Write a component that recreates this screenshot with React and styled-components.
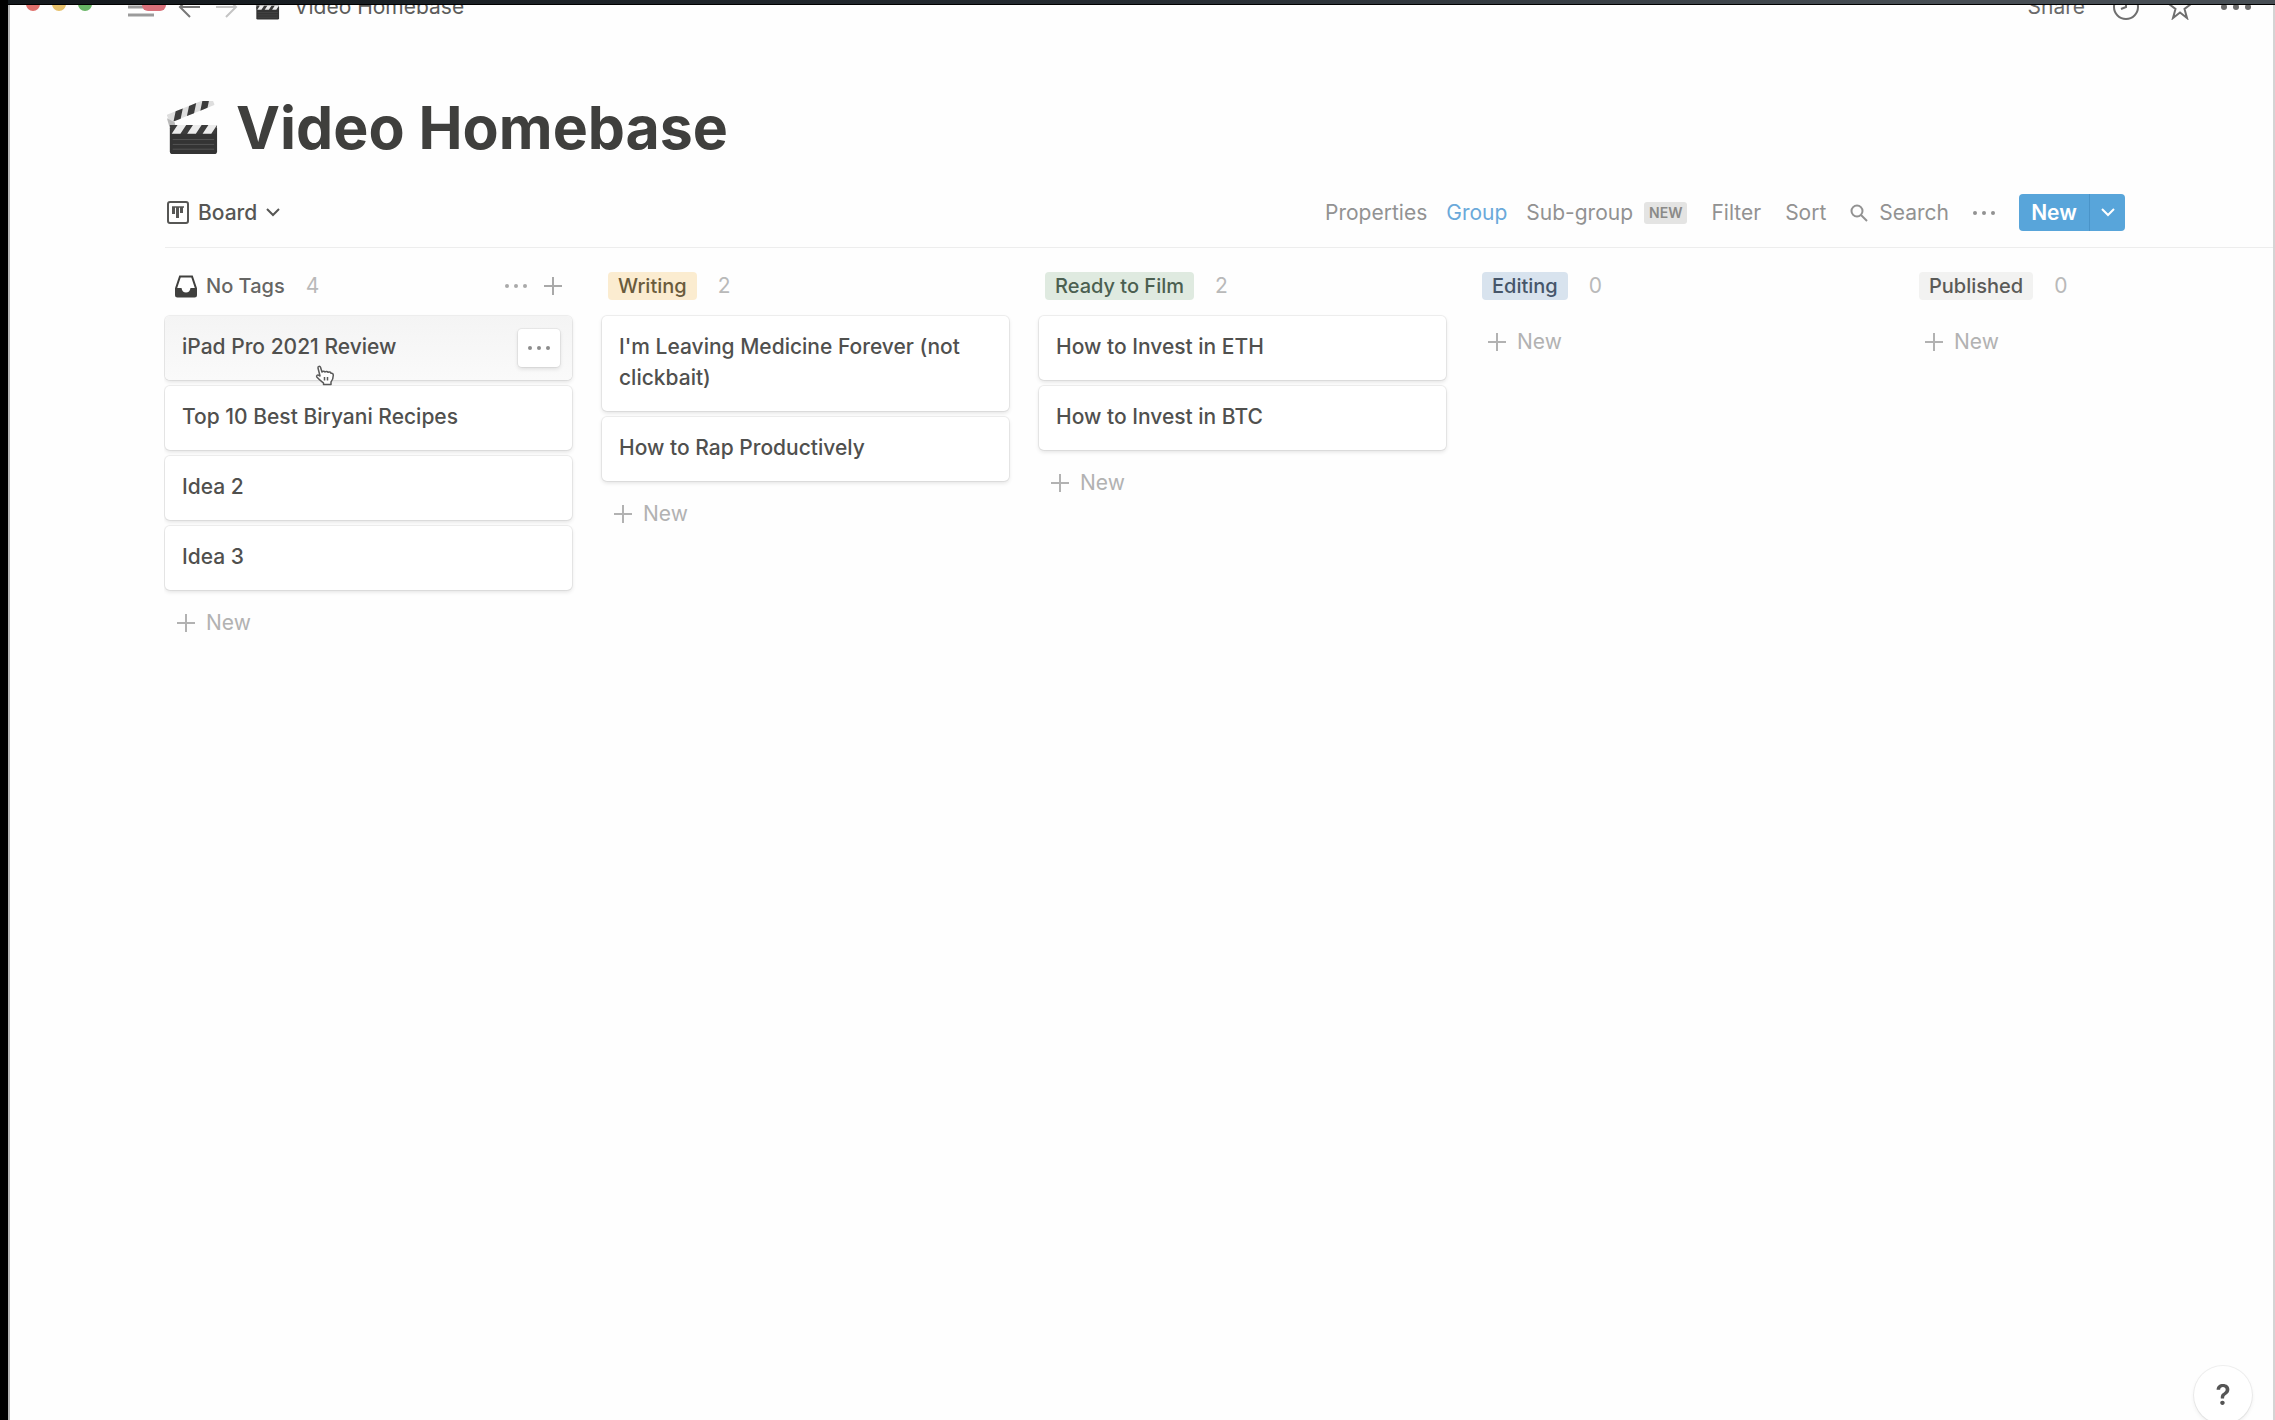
import React from "react";
import styled, { createGlobalStyle, css } from "styled-components";

const GlobalStyle = createGlobalStyle`
  *, *::before, *::after { box-sizing: border-box; }
  body {
    margin: 0;
    background: #fefefe;
    color: #4a4a48;
    font-family: Inter, "Liberation Sans", sans-serif;
    font-size: 21px;
    line-height: 32px;
  }
  h1, h2, p, ul { margin: 0; padding: 0; }
  button { font: inherit; color: inherit; background: none; border: 0; padding: 0; cursor: pointer; }
  svg { display: block; flex: none; }
`;

const Desktop = styled.div`
  min-height: 100vh;
  display: flex;
  flex-direction: column;
  overflow: hidden;
  border-left: 8px solid #000;
`;

const DesktopStrip = styled.div`
  height: 5px;
  margin-left: -8px;
  border-bottom: 1px solid #000;
  background: linear-gradient(90deg, #14191d 0%, #262c32 50%, #474e54 85%);
`;

const AppWindow = styled.div`
  flex: 1;
  min-width: 0;
  display: flex;
  flex-direction: column;
  border-left: 2px solid #b4b4b4;
  border-right: 2px solid #d4d4d4;
`;

const TopBar = styled.header`
  height: 16px;
  display: flex;
  align-items: flex-end;
  overflow: hidden;
`;

const TopBarRow = styled.div`
  flex: 1;
  height: 28px;
  padding: 0 22px 0 16px;
  display: flex;
  align-items: center;
  justify-content: space-between;
`;

const BarGroup = styled.div`
  display: flex;
  align-items: center;
  gap: ${(p) => p.$gap}px;
`;

const Lights = styled.div`
  display: flex;
  gap: 12px;
  margin: 0 24px 6px 0;
`;

const Light = styled.span`
  width: 14px;
  height: 14px;
  border-radius: 50%;
  background: ${(p) => p.$color};
`;

const Crumb = styled.span`
  display: flex;
  align-items: center;
  gap: 14px;
  margin-left: 4px;
  color: #5c5c5a;
`;

const BarButton = styled.button`
  color: #6a6a6a;
`;

const Page = styled.main`
  flex: 1;
  display: flex;
  flex-direction: column;
  padding: 70px 0 0 155px;
`;

const Title = styled.h1`
  display: flex;
  align-items: center;
  gap: 17px;
  height: 74px;
  font-size: 59px;
  line-height: 74px;
  font-weight: 700;
  color: #3f3f3d;
`;

const Toolbar = styled.div`
  display: flex;
  align-items: center;
  justify-content: space-between;
  height: 83px;
  padding: 13px 148px 0 0;
  border-bottom: 1px solid #ededed;
`;

const ViewButton = styled.button`
  display: flex;
  align-items: center;
  gap: 9px;
  padding-left: 2px;
  font-weight: 500;
  color: #565654;
`;

const Actions = styled.div`
  display: flex;
  align-items: center;
  gap: 24px;
`;

const Action = styled.button`
  display: flex;
  align-items: center;
  gap: 11px;
  color: ${(p) => (p.$active ? "#6aa9da" : "#929292")};
`;

const ActionPair = styled.div`
  display: flex;
  gap: 19px;
`;

const NewBadge = styled.span`
  padding: 0 5px;
  border-radius: 3px;
  background: #e4e4e3;
  color: #8a8a88;
  font-size: 14px;
  line-height: 22px;
  font-weight: 600;
`;

const SplitButton = styled.div`
  display: flex;
  height: 37px;
  border-radius: 4px;
  overflow: hidden;
  background: #58a5da;
  color: #fff;
`;

const SplitMain = styled.button`
  width: 71px;
  font-weight: 600;
  border-right: 1px solid #4a94c9;
`;

const SplitMenu = styled.button`
  width: 35px;
  display: grid;
  place-items: center;
`;

const Board = styled.div`
  display: flex;
  gap: 30px;
  padding: 22px 0 0 1px;
  margin-left: -1px;
  overflow: hidden;
`;

const Column = styled.section`
  flex: 0 0 407px;
  padding: 0 0 8px;
`;

const ColumnHead = styled.div`
  display: flex;
  align-items: center;
  gap: 21px;
  height: 32px;
  padding: 0 10px 0 6px;
`;

const tones = {
  yellow: css`background: #fbecd0; color: #6a5b3c;`,
  green: css`background: #dfeae0; color: #4b5f50;`,
  blue: css`background: #d8e3ee; color: #46566a;`,
  gray: css`background: #f2f2f1; color: #5a5a58;`,
};

const Tag = styled.h2`
  padding: 0 10px;
  border-radius: 4px;
  font-size: 20px;
  line-height: 28px;
  font-weight: 500;
  ${(p) => tones[p.$tone]}
`;

const PlainTag = styled.h2`
  display: flex;
  align-items: center;
  gap: 9px;
  padding-left: 4px;
  font-size: 20px;
  line-height: 28px;
  font-weight: 500;
  color: #666664;
`;

const Count = styled.span`
  color: #b9b9b9;
`;

const HeadTools = styled.div`
  display: flex;
  align-items: center;
  gap: 17px;
  margin-left: auto;
  color: #a9a9a9;
`;

const Cards = styled.ul`
  display: flex;
  flex-direction: column;
  gap: 6px;
  padding-top: 14px;
  list-style: none;
`;

const Card = styled.li`
  display: flex;
  justify-content: space-between;
  align-items: flex-start;
  padding: 15px 12px 18px 17px;
  border-radius: 5px;
  background: ${(p) => (p.$hover ? "linear-gradient(180deg, #f4f4f4, #fafafa)" : "#fff")};
  box-shadow: 0 0 0 1px rgba(15, 15, 15, 0.06), 0 2px 4px rgba(15, 15, 15, 0.12);
  font-weight: 500;
  line-height: 31px;
  color: #50504e;
`;

const CardMenu = styled.button`
  display: grid;
  place-items: center;
  width: 42px;
  height: 38px;
  margin: -2px 0 -5px;
  border-radius: 4px;
  background: #fff;
  box-shadow: 0 0 0 1px rgba(15, 15, 15, 0.05), 0 2px 4px rgba(15, 15, 15, 0.12);
  color: #8c8c8c;
`;

const AddButton = styled.button`
  display: flex;
  align-items: center;
  gap: 11px;
  margin-top: ${(p) => (p.$empty ? 24 : 17)}px;
  padding-left: 12px;
  color: #b2b2b2;
`;

const Pointer = styled.div`
  position: absolute;
  left: 315px;
  top: 365px;
  pointer-events: none;
`;

const Help = styled.button`
  position: fixed;
  right: 23px;
  bottom: -4px;
  width: 58px;
  height: 58px;
  border-radius: 50%;
  background: #fff;
  box-shadow: 0 0 0 1px rgba(15, 15, 15, 0.06), 0 2px 4px rgba(15, 15, 15, 0.08);
  font-size: 28px;
  font-weight: 600;
  color: #555;
`;

const Clapper = ({ size }) => (
  <svg width={size} height={size} viewBox="0 0 54 56" aria-hidden="true">
    <g transform="rotate(-22 3 20)">
      <rect x="3" y="14" width="50" height="9" rx="1" fill="#dedede" />
      <path d="M13 14h8l-6 9H7zM28 14h8l-6 9h-8zM43 14h8l-6 9h-8z" fill="#3c3c3c" />
    </g>
    <path d="M1 18l8 4 3 13-7-3z" fill="#b9b9b9" />
    <path d="M4 28h49v24a3 3 0 0 1-3 3H7a3 3 0 0 1-3-3z" fill="#343434" />
    <path d="M4 25h49l-1 9H5z" fill="#3c3c3c" />
    <path d="M12 25h9l-6 9H6zM28 25h9l-6 9h-9zM44 25h9l-6 9h-9z" fill="#ececec" />
    <path d="M7 40h43M7 45h43M7 50h43" stroke="#555" strokeWidth="1" />
  </svg>
);

const Dots = ({ width = 22, r = 2 }) => (
  <svg width={width} height="6" viewBox={`0 0 ${width} 6`} fill="currentColor" aria-hidden="true">
    <circle cx={r} cy="3" r={r} />
    <circle cx={width / 2} cy="3" r={r} />
    <circle cx={width - r} cy="3" r={r} />
  </svg>
);

const Plus = () => (
  <svg width="18" height="18" viewBox="0 0 18 18" stroke="currentColor" strokeWidth="2" aria-hidden="true">
    <path d="M9 0v18M0 9h18" />
  </svg>
);

const Chevron = () => (
  <svg width="14" height="9" viewBox="0 0 14 9" fill="none" stroke="currentColor" strokeWidth="2" aria-hidden="true">
    <path d="M1 1l6 6 6-6" />
  </svg>
);

const Arrow = ({ flip, color }) => (
  <svg width="24" height="24" viewBox="0 0 24 24" fill="none" stroke={color} strokeWidth="2" aria-hidden="true">
    <path d={flip ? "M2 12h20M12 2l10 10-10 10" : "M22 12H2M12 2L2 12l10 10"} />
  </svg>
);

const MenuIcon = () => (
  <svg width="38" height="24" viewBox="0 0 38 24" aria-hidden="true">
    <path d="M0 12h26M0 20h26" stroke="#9b9b9b" strokeWidth="3" />
    <rect x="14" y="-4" width="24" height="20" rx="6" fill="#d9707a" />
  </svg>
);

const BoardIcon = () => (
  <svg width="22" height="23" viewBox="0 0 22 23" fill="none" aria-hidden="true">
    <rect x="1" y="1" width="20" height="21" rx="2" stroke="#565654" strokeWidth="2" />
    <path d="M6.500 6v7M10.500 6v11M14.500 6v6" stroke="#565654" strokeWidth="3" />
    <path d="M5 6h12" stroke="#565654" strokeWidth="1.500" />
  </svg>
);

const Inbox = () => (
  <svg width="22" height="23" viewBox="0 0 22 23" aria-hidden="true">
    <path d="M5 1.500h12l4 12V20a1.500 1.500 0 0 1-1.500 1.500h-17A1.500 1.500 0 0 1 1 20v-6.500z" fill="#fff" stroke="#40403e" strokeWidth="2" />
    <path d="M1 13h5.500c.5 3 2 4.500 4.500 4.500s4-1.500 4.500-4.500H21v8.500H1z" fill="#40403e" />
  </svg>
);

const SearchIcon = () => (
  <svg width="18" height="18" viewBox="0 0 18 18" fill="none" stroke="#929292" strokeWidth="2" aria-hidden="true">
    <circle cx="7" cy="7" r="5.500" />
    <path d="M11 11l6 6" />
  </svg>
);

const ClockIcon = () => (
  <svg width="26" height="26" viewBox="0 0 26 26" fill="none" stroke="#6f6f6f" strokeWidth="2" aria-hidden="true">
    <circle cx="13" cy="13" r="12" />
    <path d="M13 5v8l-5 2" />
  </svg>
);

const StarIcon = () => (
  <svg width="26" height="26" viewBox="0 0 26 26" fill="none" stroke="#6f6f6f" strokeWidth="2" aria-hidden="true">
    <path d="M13 2l3 8h8l-6.500 5L20 24l-7-5.500L6 24l2.500-9L2 10h8z" />
  </svg>
);

const Hand = () => (
  <svg width="20" height="21" viewBox="0 0 20 21" fill="#fff" stroke="#5a5a5a" strokeWidth="1.500" strokeLinejoin="round" aria-hidden="true">
    <path d="M5 11L3 3c-.3-1.800 2-2.300 2.500-.7L7 7c1-1 2.300-.8 3 0 1-.8 2.300-.6 3 .3 1-.6 2.600-.3 3 1 1.400-.3 2.300.5 2.300 2 0 3-.5 4.500-2.300 6.700V19.500H8.500V18C6 16 4 14.500 1.800 12c-.8-1.500.8-2.600 2-1.600z" />
    <path d="M9.500 12v3.500M12.500 12v3.500" />
  </svg>
);

const columns = [
  { name: "No Tags", count: 4, cards: ["iPad Pro 2021 Review", "Top 10 Best Biryani Recipes", "Idea 2", "Idea 3"], hovered: 0 },
  { name: "Writing", tone: "yellow", count: 2, cards: ["I'm Leaving Medicine Forever (not clickbait)", "How to Rap Productively"] },
  { name: "Ready to Film", tone: "green", count: 2, cards: ["How to Invest in ETH", "How to Invest in BTC"] },
  { name: "Editing", tone: "blue", count: 0, cards: [] },
  { name: "Published", tone: "gray", count: 0, cards: [] },
];

const BoardColumn = ({ name, tone, count, cards, hovered }) => (
  <Column>
    <ColumnHead>
      {tone ? <Tag $tone={tone}>{name}</Tag> : <PlainTag><Inbox />{name}</PlainTag>}
      <Count>{count}</Count>
      {hovered !== undefined && (
        <HeadTools>
          <button aria-label="Column options"><Dots /></button>
          <button aria-label="Add card"><Plus /></button>
        </HeadTools>
      )}
    </ColumnHead>
    {cards.length > 0 && (
      <Cards>
        {cards.map((card, i) => (
          <Card key={card} $hover={i === hovered}>
            <p>{card}</p>
            {i === hovered && <CardMenu aria-label="Card options"><Dots /></CardMenu>}
          </Card>
        ))}
      </Cards>
    )}
    <AddButton $empty={cards.length === 0}><Plus />New</AddButton>
  </Column>
);

export default function App() {
  return (
    <>
      <GlobalStyle />
      <Desktop>
        <DesktopStrip />
        <AppWindow>
          <TopBar>
            <TopBarRow>
              <BarGroup $gap={12}>
                <Lights>
                  <Light $color="#e0706c" />
                  <Light $color="#e6c06a" />
                  <Light $color="#68b565" />
                </Lights>
                <BarButton aria-label="Menu"><MenuIcon /></BarButton>
                <BarButton aria-label="Back"><Arrow color="#777" /></BarButton>
                <BarButton aria-label="Forward"><Arrow flip color="#c4c4c4" /></BarButton>
                <Crumb><Clapper size={26} />Video Homebase</Crumb>
              </BarGroup>
              <BarGroup $gap={28}>
                <BarButton>Share</BarButton>
                <BarButton aria-label="Updates"><ClockIcon /></BarButton>
                <BarButton aria-label="Favorite"><StarIcon /></BarButton>
                <BarButton aria-label="More"><Dots width={30} r={3} /></BarButton>
              </BarGroup>
            </TopBarRow>
          </TopBar>
          <Page>
            <Title><Clapper size={54} />Video Homebase</Title>
            <Toolbar>
              <ViewButton><BoardIcon />Board<Chevron /></ViewButton>
              <Actions>
                <ActionPair>
                  <Action>Properties</Action>
                  <Action $active>Group</Action>
                  <Action>Sub-group<NewBadge>NEW</NewBadge></Action>
                </ActionPair>
                <Action>Filter</Action>
                <Action>Sort</Action>
                <Action><SearchIcon />Search</Action>
                <Action aria-label="More"><Dots /></Action>
                <SplitButton>
                  <SplitMain>New</SplitMain>
                  <SplitMenu aria-label="New options"><Chevron /></SplitMenu>
                </SplitButton>
              </Actions>
            </Toolbar>
            <Board>
              {columns.map((column) => (
                <BoardColumn key={column.name} {...column} />
              ))}
            </Board>
          </Page>
        </AppWindow>
        <Pointer><Hand /></Pointer>
        <Help aria-label="Help">?</Help>
      </Desktop>
    </>
  );
}
